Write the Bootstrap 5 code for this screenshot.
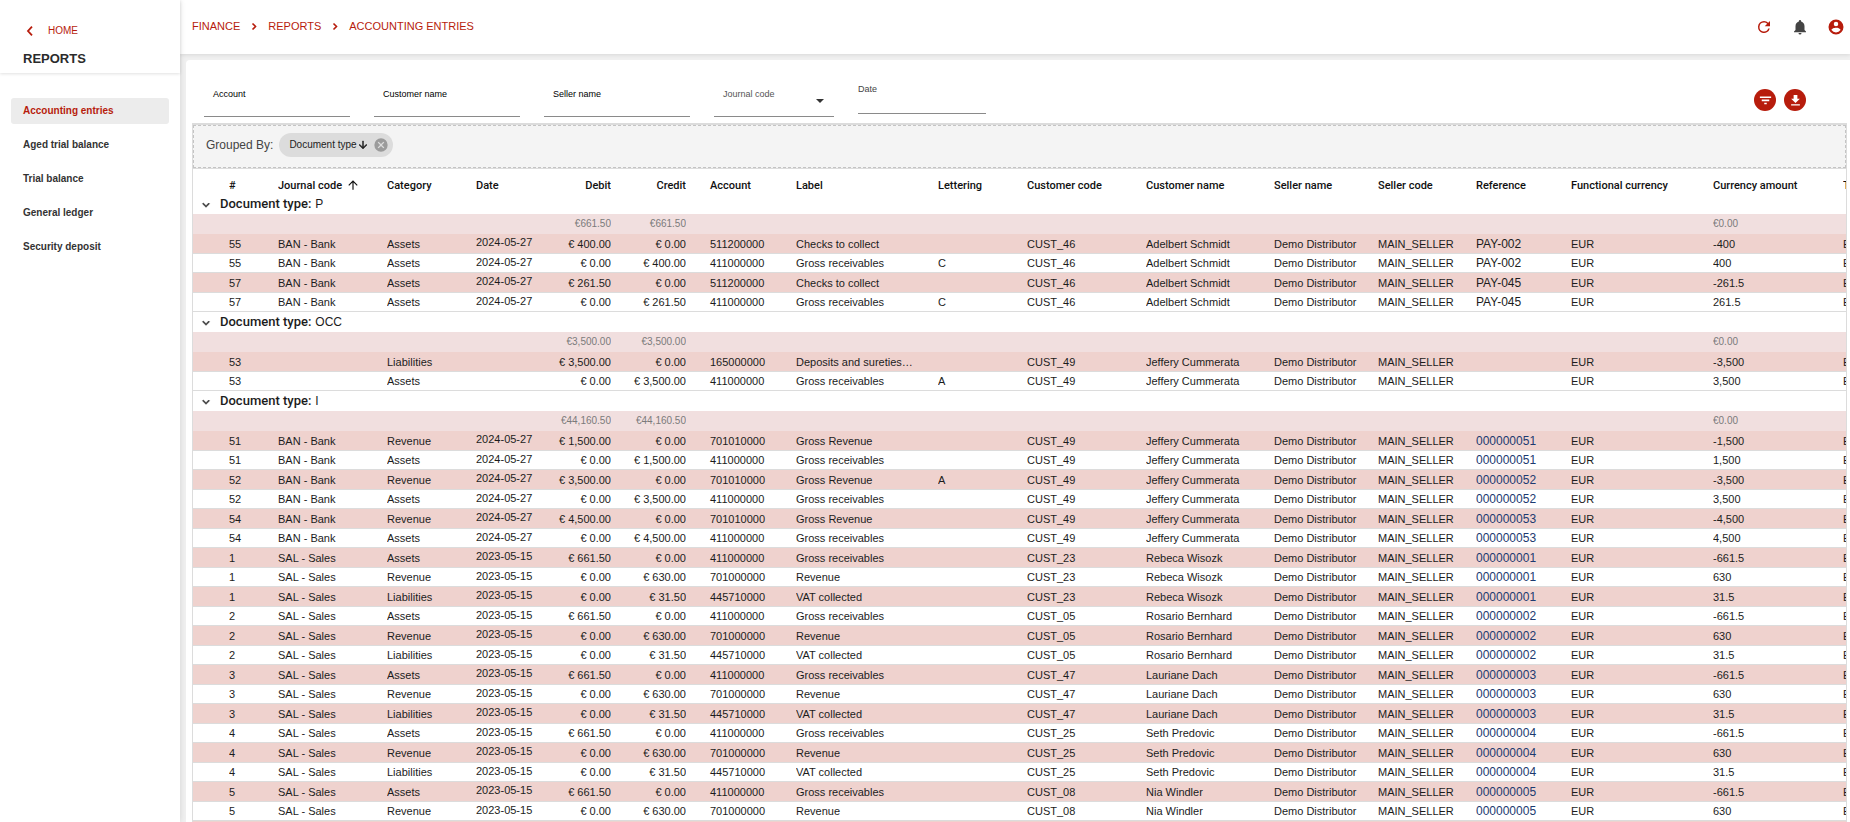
<!DOCTYPE html>
<html lang="en">
<head>
<meta charset="utf-8">
<meta name="viewport" content="width=device-width, initial-scale=1">
<title>Accounting entries</title>
<link rel="stylesheet" href="https://cdn.jsdelivr.net/npm/bootstrap@5.3.0/dist/css/bootstrap.min.css">
<style>
:root { --brand: #b71c0c; --line: #dcdcdc; }
body { font-family: "Liberation Sans", Arial, sans-serif; font-size: 11px; line-height: 16px; color: #1c1c1c; background: #f0f0f0; }
a { color: var(--brand); text-decoration: none; }
svg { fill: currentColor; flex: none; display: block; }
.sidebar { width: 180px; box-shadow: 0 0 6px rgba(0,0,0,.12); z-index: 2; }
.side-head { height: 73px; padding: 23px 23px 0; box-shadow: 0 1px 3px rgba(0,0,0,.12); }
.side-head a { font-size: 10px; gap: 11px; }
.side-head h1 { font-size: 13px; line-height: 16px; font-weight: 700; margin: 12px 0 0; color: #2b2b2b; }
.side-nav { padding: 25px 11px 0; gap: 8px; }
.side-nav .nav-link { font-size: 10px; font-weight: 700; line-height: 16px; padding: 5px 12px; color: #333; border-radius: 3px; }
.side-nav .nav-link.active { color: var(--brand); background: #ececec; }
.topbar { height: 54px; padding: 0 5px 0 12px; box-shadow: 0 1px 4px rgba(0,0,0,.1); z-index: 1; }
.crumbs { font-size: 11px; gap: 10px; padding-bottom: 2px; }
.tools { gap: 18px; }
.tools .btn { padding: 0; border: 0; color: var(--brand); }
.tools .bell { color: #444; }
.panel { margin: 6px 0 0 6px; padding: 0 3px 0 6px; border-radius: 4px 0 0 0; }
.filters { height: 63px; padding: 26px 41px 0 12px; gap: 24px; }
.field { width: 146px; height: 31px; border-bottom: 1px solid #8a8a8a; font-size: 9px; line-height: 16px; padding: 0 9px; color: #000; }
.field.pick { width: 120px; color: #555; }
.field.day { width: 128px; height: 33px; margin-top: -5px; padding: 0; color: #444; }
.field input, .field select { position: absolute; inset: 0; width: 100%; border: 0; background: none; outline: 0; appearance: none; font-size: 11px; padding: 8px 9px 0; }
.field .caret { position: absolute; right: 10px; top: 13px; border: 4px solid transparent; border-top-color: #333; border-bottom: 0; }
.actions { gap: 8px; padding-top: 3px; }
.round { width: 22px; height: 22px; padding: 0; border: 0; border-radius: 50%; background: var(--brand); color: #fff; }
.round:hover { background: #931508; color: #fff; }
.grid-box { border: 1px solid var(--line); border-top-width: 2px; border-bottom: 0; }
.group-bar { height: 43px; background: #f4f4f4; border: 1px dashed #c4c4c4; padding: 0 12px 4px; gap: 6px; font-size: 12px; color: #444; }
.chip { height: 24px; border-radius: 12px; background: #dcdcdc; padding: 0 4px 0 10px; font-size: 10px; color: #222; }
.chip .btn { padding: 0; border: 0; color: #9b9b9b; margin-left: 4px; }
.entries { table-layout: fixed; width: 100%; min-width: 1770px; border-collapse: separate; border-spacing: 0; border-top: 1px solid var(--line); }
.entries th, .entries td { padding: 0; white-space: nowrap; overflow: hidden; text-overflow: ellipsis; vertical-align: middle; line-height: 16px; }
.entries thead th { height: 25px; padding-top: 9px; font-family: Roboto, sans-serif; font-weight: 500; color: #111; }
.entries thead svg { display: inline-block; margin-left: 1px; vertical-align: -3px; }
.entries .num { text-align: right; }
.entries .acc { padding-left: 24px; }
.entries .lab { padding-right: 24px; }
.entries tbody td { height: 19px; }
.entries .band td { height: 20px; background: #efd2ce; border-bottom: 1px solid var(--line); }
.entries .plain td { border-bottom: 1px solid var(--line); }
.entries .head td { height: 20px; font-size: 12px; }
.entries .head b { font-family: Roboto, sans-serif; font-size: 13px; font-weight: 500; margin-right: 4px; }
.entries .head .btn { padding: 2px 0 0; border: 0; margin: 0 7px 0 6px; color: #333; }
.entries .total td { height: 20px; background: #f1dfdf; color: #7b7b7b; font-size: 10px; }
.entries tbody .date { vertical-align: top; }
.entries tbody .ref { font-size: 12px; }
.entries .ref a { color: #1c3a70; }
.w36{width:36px}.w49{width:49px}.w109{width:109px}.w89{width:89px}.w79{width:79px}.w56{width:56px}.w75{width:75px}.w110{width:110px}.w142{width:142px}.w119{width:119px}.w128{width:128px}.w104{width:104px}.w98{width:98px}.w95{width:95px}.w130{width:130px}.w120{width:120px}
</style>
</head>
<body>
<div class="d-flex vh-100 overflow-hidden">
  <aside class="sidebar bg-white flex-shrink-0 position-relative">
    <div class="side-head">
      <a href="#" class="d-flex align-items-center"><svg width="14" height="14" viewBox="0 0 14 14"><path d="M9 2.600 5 7l4 4.400" fill="none" stroke="currentColor" stroke-width="1.800"/></svg>HOME</a>
      <h1>REPORTS</h1>
    </div>
    <nav class="side-nav nav flex-column">
      <a class="nav-link active" href="#">Accounting entries</a>
      <a class="nav-link" href="#">Aged trial balance</a>
      <a class="nav-link" href="#">Trial balance</a>
      <a class="nav-link" href="#">General ledger</a>
      <a class="nav-link" href="#">Security deposit</a>
    </nav>
  </aside>
  <div class="d-flex flex-column flex-grow-1 overflow-hidden">
    <header class="topbar bg-white d-flex align-items-center justify-content-between flex-shrink-0 position-relative">
      <nav class="crumbs d-flex align-items-center" aria-label="Breadcrumb">
        <a href="#">FINANCE</a>
        <svg width="8" height="10" viewBox="0 0 8 10"><path d="M2.500 2.500 5.500 5.500 2.500 8.500" fill="none" stroke="#b71c0c" stroke-width="1.600"/></svg>
        <a href="#">REPORTS</a>
        <svg width="8" height="10" viewBox="0 0 8 10"><path d="M2.500 2.500 5.500 5.500 2.500 8.500" fill="none" stroke="#b71c0c" stroke-width="1.600"/></svg>
        <a href="#">ACCOUNTING ENTRIES</a>
      </nav>
      <div class="tools d-flex">
        <button class="btn" aria-label="Refresh"><svg width="18" height="18" viewBox="0 0 24 24"><path d="M17.650 6.350A7.960 7.960 0 0 0 12 4a8 8 0 1 0 7.730 10h-2.080A6 6 0 1 1 12 6c1.660 0 3.140.69 4.220 1.780L13 11h7V4z"/></svg></button>
        <button class="btn bell" aria-label="Notifications"><svg width="18" height="18" viewBox="0 0 24 24"><path d="M12 22a2 2 0 0 0 2-2h-4a2 2 0 0 0 2 2zm6-6v-5c0-3.070-1.640-5.640-4.500-6.320V4a1.500 1.500 0 0 0-3 0v.68C7.630 5.360 6 7.920 6 11v5l-2 2v1h16v-1z"/></svg></button>
        <button class="btn" aria-label="Account"><svg width="18" height="18" viewBox="0 0 24 24"><path d="M12 2a10 10 0 1 0 0 20 10 10 0 0 0 0-20zm0 3a3 3 0 1 1 0 6 3 3 0 0 1 0-6zm0 14.200a7.200 7.200 0 0 1-6-3.220c.03-1.990 4-3.080 6-3.080s5.970 1.090 6 3.080a7.200 7.200 0 0 1-6 3.220z"/></svg></button>
      </div>
    </header>
    <main class="panel bg-white flex-grow-1 overflow-hidden d-flex flex-column">
      <form class="filters d-flex flex-shrink-0">
        <div class="field position-relative"><label for="fAccount">Account</label><input id="fAccount" type="text"></div>
        <div class="field position-relative"><label for="fCustomer">Customer name</label><input id="fCustomer" type="text"></div>
        <div class="field position-relative"><label for="fSeller">Seller name</label><input id="fSeller" type="text"></div>
        <div class="field pick position-relative"><label for="fJournal">Journal code</label><select id="fJournal"><option></option></select><span class="caret"></span></div>
        <div class="field day position-relative"><label for="fDate">Date</label><input id="fDate" type="text"></div>
        <div class="actions d-flex ms-auto align-items-center align-self-start">
          <button type="button" class="btn round d-flex align-items-center justify-content-center" aria-label="Filter"><svg width="15" height="15" viewBox="0 0 24 24"><path d="M10 18h4v-2.500h-4zM3 5.500V8h18V5.500zm3 7.500h12v-2.500H6z"/></svg></button>
          <button type="button" class="btn round d-flex align-items-center justify-content-center" aria-label="Download"><svg width="15" height="15" viewBox="0 0 24 24"><path d="M19 9h-4V3H9v6H5l7 7zM5 18v2h14v-2z"/></svg></button>
        </div>
      </form>
      <section class="grid-box flex-grow-1 overflow-hidden">
        <div class="group-bar d-flex align-items-center">
          <span>Grouped By:</span>
          <span class="chip d-flex align-items-center">Document type
            <svg width="12" height="12" viewBox="0 0 24 24"><path d="m20 12-1.410-1.410L13 16.170V4h-2v12.170l-5.580-5.590L4 12l8 8z" stroke="currentColor"/></svg>
            <button class="btn" aria-label="Remove grouping"><svg width="16" height="16" viewBox="0 0 24 24"><path d="M12 2a10 10 0 1 0 0 20 10 10 0 0 0 0-20zm5 13.590L15.590 17 12 13.410 8.410 17 7 15.590 10.590 12 7 8.410 8.410 7 12 10.590 15.590 7 17 8.410 13.410 12z"/></svg></button>
          </span>
        </div>
        <table class="entries">
          <colgroup><col class="w36"><col class="w49"><col class="w109"><col class="w89"><col class="w79"><col class="w56"><col class="w75"><col class="w110"><col class="w142"><col class="w89"><col class="w119"><col class="w128"><col class="w104"><col class="w98"><col class="w95"><col class="w142"><col class="w130"><col class="w120"></colgroup>
          <thead><tr><th></th><th>#</th><th>Journal code <svg width="14" height="14" viewBox="0 0 24 24"><path d="m4 12 1.410 1.410L11 7.830V20h2V7.830l5.580 5.590L20 12l-8-8z"/></svg></th><th>Category</th><th>Date</th><th class="num">Debit</th><th class="num">Credit</th><th class="acc">Account</th><th>Label</th><th>Lettering</th><th>Customer code</th><th>Customer name</th><th>Seller name</th><th>Seller code</th><th>Reference</th><th>Functional currency</th><th>Currency amount</th><th>Transactional currency</th></tr></thead>
          <tbody id="rows"></tbody>
        </table>
      </section>
    </main>
  </div>
</div>
<script src="https://cdn.jsdelivr.net/npm/bootstrap@5.3.0/dist/js/bootstrap.bundle.min.js"></script>
<script>
const BAN = 'BAN - Bank', D24 = '2024-05-27', D23 = '2023-05-15';
const GR = 'Gross receivables', GV = 'Gross Revenue', CC = 'Checks to collect';
// number, journal, category, date, debit, credit, account, label, lettering, customer code, customer, reference, amount
const bank = (n, cat, deb, cre, acc, lab, let_, ref, amt) =>
  [n, BAN, cat, D24, deb, cre, acc, lab, let_, 'CUST_49', 'Jeffery Cummerata', ref, amt];
const sale = (n, code, name) => {
  const ref = '00000000' + n;
  return [
    [n, 'SAL - Sales', 'Assets', D23, '661.50', '0.00', '411000000', GR, '', code, name, ref, '-661.5'],
    [n, 'SAL - Sales', 'Revenue', D23, '0.00', '630.00', '701000000', 'Revenue', '', code, name, ref, '630'],
    [n, 'SAL - Sales', 'Liabilities', D23, '0.00', '31.50', '445710000', 'VAT collected', '', code, name, ref, '31.5']
  ];
};
const A = 'Adelbert Schmidt', J = 'Jeffery Cummerata';
const groups = [
  { type: 'P', sum: '661.50', rows: [
    [55, BAN, 'Assets', D24, '400.00', '0.00', '511200000', CC, '', 'CUST_46', A, 'PAY-002', '-400'],
    [55, BAN, 'Assets', D24, '0.00', '400.00', '411000000', GR, 'C', 'CUST_46', A, 'PAY-002', '400'],
    [57, BAN, 'Assets', D24, '261.50', '0.00', '511200000', CC, '', 'CUST_46', A, 'PAY-045', '-261.5'],
    [57, BAN, 'Assets', D24, '0.00', '261.50', '411000000', GR, 'C', 'CUST_46', A, 'PAY-045', '261.5'] ] },
  { type: 'OCC', sum: '3,500.00', rows: [
    [53, '', 'Liabilities', '', '3,500.00', '0.00', '165000000', 'Deposits and sureties received', '', 'CUST_49', J, '', '-3,500'],
    [53, '', 'Assets', '', '0.00', '3,500.00', '411000000', GR, 'A', 'CUST_49', J, '', '3,500'] ] },
  { type: 'I', sum: '44,160.50', rows: [
    bank(51, 'Revenue', '1,500.00', '0.00', '701010000', GV, '', '000000051', '-1,500'),
    bank(51, 'Assets', '0.00', '1,500.00', '411000000', GR, '', '000000051', '1,500'),
    bank(52, 'Revenue', '3,500.00', '0.00', '701010000', GV, 'A', '000000052', '-3,500'),
    bank(52, 'Assets', '0.00', '3,500.00', '411000000', GR, '', '000000052', '3,500'),
    bank(54, 'Revenue', '4,500.00', '0.00', '701010000', GV, '', '000000053', '-4,500'),
    bank(54, 'Assets', '0.00', '4,500.00', '411000000', GR, '', '000000053', '4,500'),
    ...sale(1, 'CUST_23', 'Rebeca Wisozk'), ...sale(2, 'CUST_05', 'Rosario Bernhard'),
    ...sale(3, 'CUST_47', 'Lauriane Dach'), ...sale(4, 'CUST_25', 'Seth Predovic'),
    ...sale(5, 'CUST_08', 'Nia Windler') ] }
];
const chevron = '<button class="btn" aria-label="Collapse group"><svg width="14" height="14" viewBox="0 0 24 24"><path d="M7.410 8.590 12 13.170l4.590-4.580L18 10l-6 6-6-6z" stroke="currentColor"/></svg></button>';
let html = '';
for (const g of groups) {
  html += `<tr class="head"><td colspan="18"><div class="d-flex align-items-center">${chevron}<b>Document type:</b>${g.type}</div></td></tr>`;
  html += `<tr class="total"><td colspan="5"></td><td class="num">€${g.sum}</td><td class="num">€${g.sum}</td><td colspan="9"></td><td>€0.00</td><td></td></tr>`;
  g.rows.forEach((r, i) => {
    const ref = /^0/.test(r[11]) ? `<a href="#">${r[11]}</a>` : r[11];
    html += `<tr class="${i % 2 ? 'plain' : 'band'}"><td></td><td>${r[0]}</td><td>${r[1]}</td><td>${r[2]}</td><td class="date">${r[3]}</td><td class="num">€ ${r[4]}</td><td class="num">€ ${r[5]}</td><td class="acc">${r[6]}</td><td class="lab">${r[7]}</td><td>${r[8]}</td><td>${r[9]}</td><td>${r[10]}</td><td>Demo Distributor</td><td>MAIN_SELLER</td><td class="ref">${ref}</td><td>EUR</td><td>${r[12]}</td><td>EUR</td></tr>`;
  });
}
document.getElementById('rows').innerHTML = html;
</script>
</body>
</html>
